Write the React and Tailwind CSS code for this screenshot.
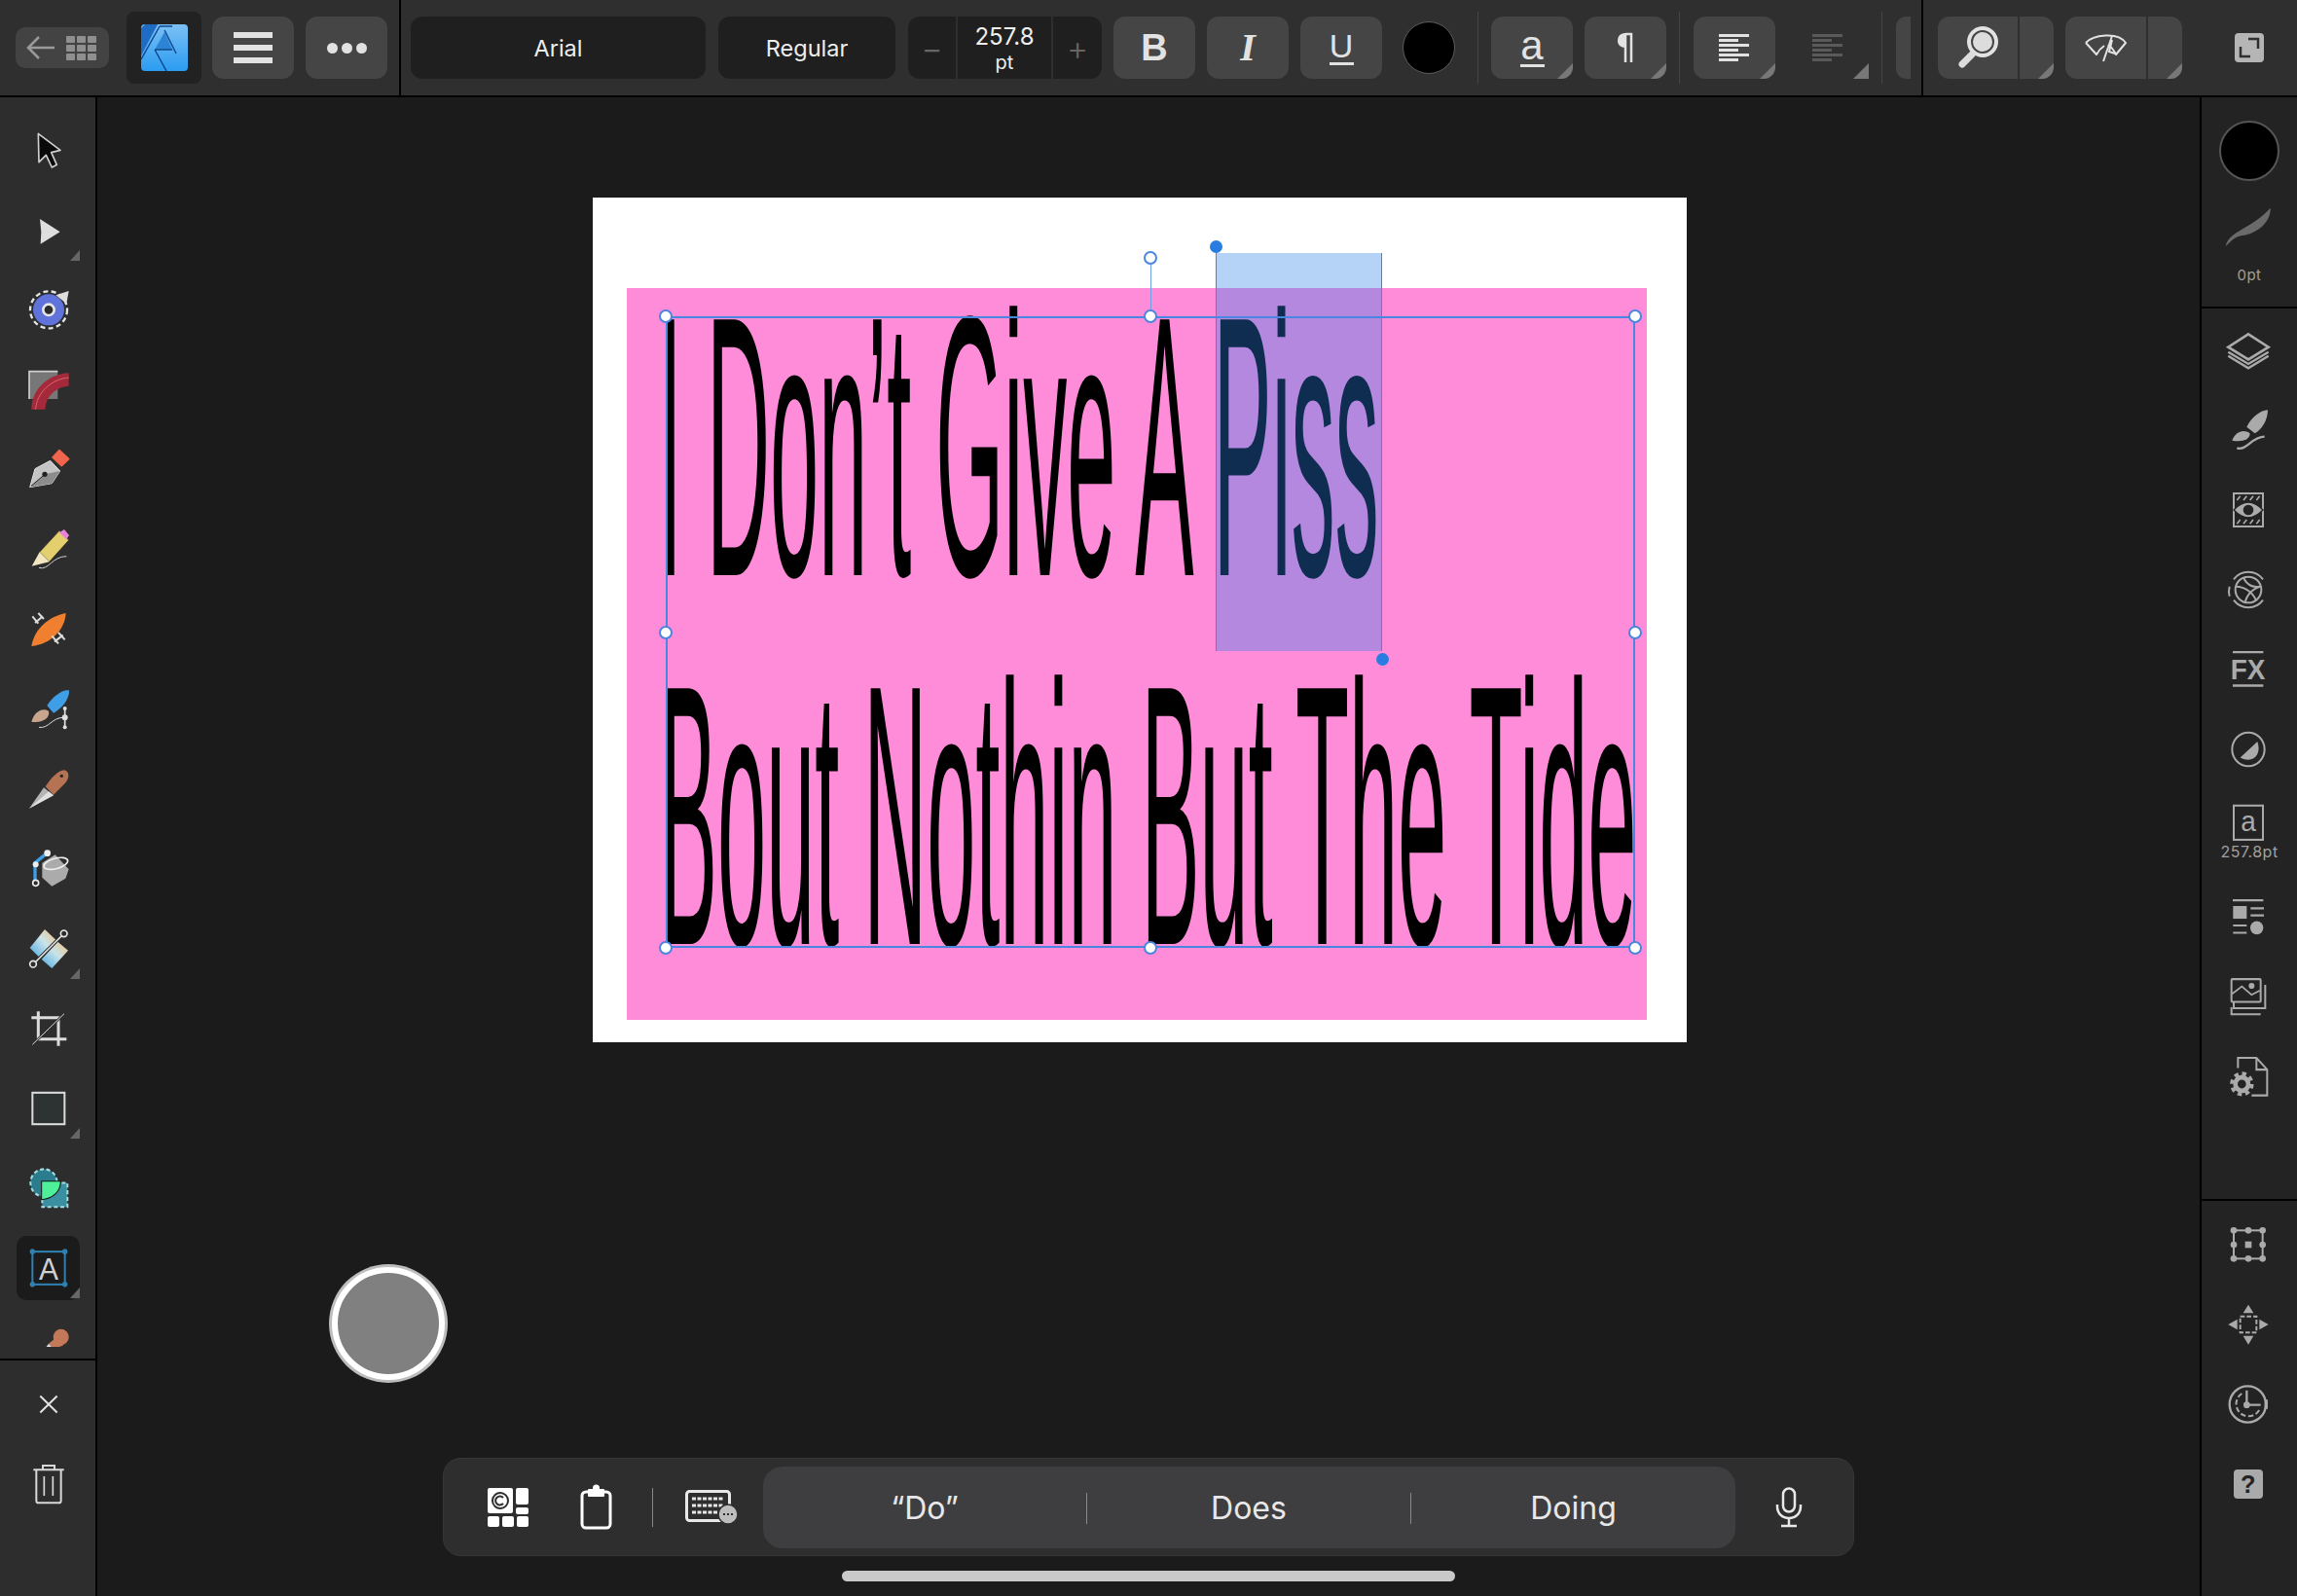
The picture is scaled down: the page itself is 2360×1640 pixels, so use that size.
import React from "react";

const Z = ({ cy, cx = 147, sy = 1, children }) => (
  <svg width={60} height={60} viewBox={`${cx - 90} ${cy - 90 * sy} 180 ${180 * sy}`} preserveAspectRatio="none" className="block" fill="none">
    {children}
  </svg>
);

const SY = 0.968;

const Corner = () => (
  <svg className="absolute right-[16px] bottom-[10px]" width="10" height="11" viewBox="0 0 10 11">
    <polygon points="10,0 10,11 0,11" fill="#666" />
  </svg>
);

const BtnCorner = () => (
  <svg className="absolute right-0 bottom-0" width="16" height="16" viewBox="0 0 16 16">
    <polygon points="16,0 16,16 0,16" fill="#787878" />
  </svg>
);

const tools = [
  { corner: false, svg: (
    <Z cy={135}><polygon points="118,82 186,133 158,140 175,178 160,186 142,148 120,170" fill="#0a0a0a" stroke="#cfcfcf" strokeWidth="5" strokeLinejoin="round" /></Z>
  ) },
  { corner: true, svg: (
    <Z cy={381}><polygon points="123,345 185,385 125,422 127,385" fill="#dedede" /></Z>
  ) },
  { corner: false, svg: (
    <Z cy={627}>
      <circle cx="150" cy="625" r="48" fill="#5f73db" />
      <circle cx="150" cy="625" r="17" fill="#2c2c2c" stroke="#e6e6e6" strokeWidth="8" />
      <circle cx="150" cy="625" r="57" stroke="#e6e6e6" strokeWidth="7" strokeDasharray="15 10" />
      <polygon points="172,580 212,567 205,606" fill="#dedede" />
    </Z>
  ) },
  { corner: false, svg: (
    <Z cy={873}>
      <rect x="90" y="815" width="88" height="85" fill="#777" />
      <path d="M90,900 V815 H178" stroke="#cfcfcf" strokeWidth="5" />
      <path d="M97,932 C97,870 150,822 212,820 L212,860 C175,862 140,890 140,932 Z" fill="#a42a3b" />
      <path d="M110,932 C112,880 160,838 212,834" stroke="#d9656f" strokeWidth="3" />
    </Z>
  ) },
  { corner: false, svg: (
    <Z cy={1119}>
      <polygon points="92,1172 108,1115 155,1090 185,1122 160,1160" fill="#c4c4c4" stroke="#e0e0e0" strokeWidth="3" strokeLinejoin="round" />
      <polygon points="92,1172 138,1132 185,1122 160,1160" fill="#8c8c8c" />
      <path d="M96,1168 L136,1134" stroke="#222" strokeWidth="3" />
      <circle cx="138" cy="1132" r="8" fill="#222" />
      <polygon points="183,1058 212,1085 190,1106 162,1080" fill="#f0654c" stroke="#f0654c" strokeWidth="5" strokeLinejoin="round" />
    </Z>
  ) },
  { corner: false, svg: (
    <Z cy={1365}>
      <polygon points="122,1372 183,1306 212,1335 152,1402" fill="#e4cf6e" stroke="#2a2a2a" strokeWidth="2" />
      <polygon points="98,1415 122,1372 152,1402" fill="#f3e7c0" />
      <polygon points="183,1312 198,1302 213,1320 205,1333" fill="#e882d8" />
      <path d="M120,1420 C150,1430 160,1385 205,1385" stroke="#cfcfcf" strokeWidth="3" />
    </Z>
  ) },
  { corner: false, svg: (
    <Z cy={141}>
      <path d="M97,192 C105,140 150,100 203,90 C200,140 160,185 97,192 Z" fill="#f08030" />
      <path d="M108,120 L132,100 M100,100 L118,122 M118,90 L135,108" stroke="#dcdcdc" strokeWidth="6" />
      <path d="M168,178 L194,158 M160,160 L180,184 M180,150 L200,172" stroke="#dcdcdc" strokeWidth="6" />
    </Z>
  ) },
  { corner: false, svg: (
    <Z cy={387}>
      <path d="M145,375 C160,350 190,325 213,328 C215,355 190,385 165,398 Z" fill="#3f9fe6" />
      <path d="M97,425 C105,395 130,380 150,392 C155,410 135,430 97,425 Z" fill="#c9a58d" />
      <path d="M200,382 V445" stroke="#e0e0e0" strokeWidth="5" />
      <path d="M120,442 C150,447 160,412 195,412" stroke="#dcdcdc" strokeWidth="3" />
      <circle cx="200" cy="384" r="6" fill="#e0e0e0" />
      <circle cx="200" cy="412" r="9" fill="#e0e0e0" />
      <circle cx="200" cy="442" r="6" fill="#e0e0e0" />
    </Z>
  ) },
  { corner: false, svg: (
    <Z cy={633}>
      <path d="M140,625 C155,600 180,575 198,574 C215,578 215,600 200,615 L165,650 Z" fill="#b57353" />
      <circle cx="190" cy="592" r="5" fill="#222" />
      <polygon points="90,692 135,628 165,652" fill="#b4b4b4" />
      <polygon points="90,692 150,640 165,652" fill="#e0e0e0" />
    </Z>
  ) },
  { corner: false, svg: (
    <Z cy={879}>
      <polygon points="130,860 170,835 212,880 202,908 160,932 130,905" fill="#ababab" />
      <ellipse cx="172" cy="862" rx="38" ry="16" transform="rotate(-15 172 862)" stroke="#eee" strokeWidth="5" />
      <path d="M108,915 L108,860 L145,830" stroke="#3f9fe6" strokeWidth="10" />
      <circle cx="110" cy="922" r="9" fill="#2c2c2c" stroke="#eee" strokeWidth="5" />
      <circle cx="110" cy="865" r="9" fill="#eee" />
      <circle cx="146" cy="830" r="10" fill="#eee" />
    </Z>
  ) },
  { corner: true, svg: (
    <Z cy={1125}>
      <defs>
        <linearGradient id="gq" x1="0" y1="1" x2="1" y2="0">
          <stop offset="0" stopColor="#4aa8e0" />
          <stop offset="0.55" stopColor="#c9e3ea" />
          <stop offset="1" stopColor="#f2c078" />
        </linearGradient>
      </defs>
      <polygon points="92,1122 138,1065 172,1097 122,1152" fill="url(#gq)" />
      <polygon points="128,1157 178,1103 210,1130 160,1185" fill="url(#gq)" />
      <path d="M105,1170 L195,1080" stroke="#2c2c2c" strokeWidth="10" />
      <path d="M105,1170 L195,1080" stroke="#e6e6e6" strokeWidth="5" />
      <circle cx="102" cy="1172" r="10" fill="#2c2c2c" stroke="#e6e6e6" strokeWidth="5" />
      <circle cx="197" cy="1078" r="10" fill="#2c2c2c" stroke="#e6e6e6" strokeWidth="5" />
    </Z>
  ) },
  { corner: false, svg: (
    <Z cy={1371}>
      <path d="M118,1318 V1403 H205 M97,1337 H180 V1424" stroke="#dcdcdc" strokeWidth="9" />
      <path d="M100,1420 L198,1325" stroke="#2c2c2c" strokeWidth="8" />
      <path d="M100,1420 L198,1325" stroke="#dcdcdc" strokeWidth="3" />
    </Z>
  ) },
  { corner: true, svg: (
    <Z cy={113} sy={SY}><rect x="100" y="66" width="99" height="94" fill="#2d3333" stroke="#dcdcdc" strokeWidth="6" /></Z>
  ) },
  { corner: false, svg: (
    <Z cy={351} sy={SY}>
      <circle cx="135" cy="335" r="41" fill="#2b7c8c" stroke="#a6dbe0" strokeWidth="6" strokeDasharray="12 8" />
      <rect x="130" y="335" width="78" height="72" fill="#3a8fa0" stroke="#a6dbe0" strokeWidth="6" strokeDasharray="12 8" />
      <path d="M128,330 H187 C187,360 165,382 128,385 Z" fill="#4ef09a" stroke="#111" strokeWidth="3" />
    </Z>
  ) },
  { corner: true, selected: true, svg: (
    <Z cy={589} sy={SY}>
      <rect x="100" y="540" width="100" height="98" stroke="#2f7fb0" strokeWidth="6" />
      <circle cx="100" cy="540" r="8" fill="#2f7fb0" />
      <circle cx="200" cy="540" r="8" fill="#2f7fb0" />
      <circle cx="100" cy="638" r="8" fill="#2f7fb0" />
      <circle cx="200" cy="638" r="8" fill="#2f7fb0" />
      <text x="150" y="624" textAnchor="middle" fontFamily="Liberation Sans" fontSize="90" fill="#d0d0d0">A</text>
    </Z>
  ) },
  { corner: false, svg: (
    <Z cy={827} sy={SY}>
      <circle cx="188" cy="795" r="24" fill="#c4785a" />
      <polygon points="175,795 150,815 165,830 195,820" fill="#c4785a" />
      <polygon points="138,830 150,815 165,830" fill="#ddd" />
    </Z>
  ) },
];

const Layers = () => (
  <Z cx={183} cy={780}>
    <path d="M118,785 L180,822 L242,785 M118,797 L180,835 L242,797" stroke="#aaa" strokeWidth="7" />
    <polygon points="180,730 242,770 180,808 118,770" fill="#232323" stroke="#aaa" strokeWidth="8" />
  </Z>
);
const RBrush = () => (
  <Z cx={183} cy={1030}>
    <path d="M175,1020 C190,990 215,970 240,968 C240,1000 220,1030 200,1040 Z" fill="#aaa" />
    <path d="M130,1062 C140,1035 165,1025 185,1040 C185,1060 160,1068 130,1062 Z" fill="#aaa" />
    <path d="M145,1085 C175,1095 190,1050 230,1050" stroke="#aaa" strokeWidth="7" />
  </Z>
);
const Mask = () => (
  <Z cx={183} cy={1275}>
    <rect x="135" y="1224" width="90" height="102" fill="#232323" stroke="#aaa" strokeWidth="6" />
    <path d="M145,1245 L155,1232 M165,1245 L175,1232 M185,1245 L195,1232 M205,1245 L215,1232 M145,1318 L155,1305 M165,1318 L175,1305 M185,1318 L195,1305 M205,1318 L215,1305" stroke="#aaa" strokeWidth="5" />
    <path d="M135,1275 Q180,1228 225,1275 Q180,1322 135,1275 Z" fill="#aaa" stroke="#232323" strokeWidth="4" />
    <circle cx="180" cy="1275" r="16" fill="#232323" />
  </Z>
);
const Swirl = () => (
  <Z cx={183} cy={180}>
    <circle cx="180" cy="180" r="40" stroke="#aaa" strokeWidth="6" />
    <path d="M135,148 A56,56 0 0 1 225,148 M225,212 A56,56 0 0 1 135,212 M122,200 A60,60 0 0 1 122,170" stroke="#aaa" strokeWidth="6" />
    <path d="M142,170 C170,170 195,190 205,215 M218,170 C195,175 175,195 170,220 M165,142 C175,165 195,175 215,170" stroke="#aaa" strokeWidth="6" />
  </Z>
);
const Fx = () => (
  <Z cx={183} cy={260} sy={SY}>
    <path d="M132,208 H226 M132,308 H226" stroke="#aaa" strokeWidth="7" />
    <text x="179" y="290" textAnchor="middle" fontFamily="Liberation Sans" fontWeight="700" fontSize="84" fill="#aaa">FX</text>
  </Z>
);
const Half = () => (
  <Z cx={183} cy={497} sy={SY}>
    <circle cx="180" cy="497" r="50" stroke="#aaa" strokeWidth="6" />
    <path d="M155,522 L208,474 C222,512 195,542 155,522 Z" fill="#aaa" />
  </Z>
);
const ListIcon = () => (
  <Z cx={183} cy={990} sy={SY}>
    <path d="M132,941 H226 M187,965 H228 M187,986 H228 M133,1016 H175 M133,1038 H175" stroke="#aaa" strokeWidth="6" />
    <rect x="133" y="958" width="42" height="38" fill="#aaa" />
    <circle cx="206" cy="1023" r="20" fill="#aaa" />
  </Z>
);
const Images = () => (
  <Z cx={183} cy={1230} sy={SY}>
    <rect x="128" y="1178" width="90" height="68" rx="3" stroke="#aaa" strokeWidth="6" />
    <path d="M130,1222 L160,1200 L190,1225 L216,1212" stroke="#aaa" strokeWidth="5" />
    <circle cx="190" cy="1198" r="9" fill="#aaa" />
    <path d="M232,1195 V1265 H135 V1246 M128,1262 V1283 H218" stroke="#aaa" strokeWidth="6" />
  </Z>
);
const DocGear = () => (
  <Z cx={183} cy={1465} sy={SY}>
    <path d="M148,1440 V1410 H205 L238,1445 V1522 H190 M205,1412 V1445 H238" stroke="#aaa" strokeWidth="6" />
    <circle cx="160" cy="1488" r="31" stroke="#aaa" strokeWidth="11" strokeDasharray="13 11.3" />
    <circle cx="160" cy="1488" r="20" stroke="#aaa" strokeWidth="14" />
  </Z>
);
const Transform = () => (
  <Z cx={183} cy={237}>
    <rect x="135" y="193" width="89" height="87" stroke="#aaa" strokeWidth="6" />
    {[[135,193],[180,193],[224,193],[135,237],[224,237],[135,280],[180,280],[224,280]].map(([x, y]) => (
      <circle key={`${x}-${y}`} cx={x} cy={y} r="10" fill="#aaa" />
    ))}
    <rect x="170" y="227" width="20" height="20" fill="#aaa" />
  </Z>
);
const Move = () => (
  <Z cx={183} cy={483}>
    <rect x="155" y="458" width="50" height="50" stroke="#aaa" strokeWidth="6" strokeDasharray="14 6" />
    <polygon points="180,422 164,448 196,448" fill="#aaa" />
    <polygon points="180,545 164,518 196,518" fill="#aaa" />
    <polygon points="118,483 146,467 146,499" fill="#aaa" />
    <polygon points="242,483 214,467 214,499" fill="#aaa" />
  </Z>
);
const Clock = () => (
  <Z cx={183} cy={725}>
    <circle cx="178" cy="725" r="56" stroke="#aaa" strokeWidth="7" />
    <path d="M160,692 A38,38 0 1 0 214,742" stroke="#aaa" strokeWidth="6" strokeDasharray="16 8" />
    <path d="M175,682 V727 H218" stroke="#aaa" strokeWidth="7" />
    <circle cx="175" cy="727" r="10" fill="#aaa" />
    <rect x="230" y="710" width="10" height="30" rx="4" fill="#aaa" />
  </Z>
);
const Help = () => (
  <Z cx={183} cy={975}>
    <rect x="135" y="930" width="90" height="90" rx="12" fill="#aaa" />
    <text x="179" y="1003" textAnchor="middle" fontFamily="Liberation Sans" fontWeight="700" fontSize="76" fill="#232323">?</text>
  </Z>
);

const rightItems = [Layers, RBrush, Mask, Swirl, Fx, Half];
const rightItems2 = [ListIcon, Images, DocGear];
const rightItems3 = [Transform, Move, Clock, Help];

const AlignLines = ({ color }) => (
  <svg width="32" height="32" viewBox="0 0 32 32" fill={color}>
    <rect x="0" y="2" width="31" height="3" />
    <rect x="0" y="7" width="20" height="3" />
    <rect x="0" y="12" width="31" height="3" />
    <rect x="0" y="17" width="20" height="3" />
    <rect x="0" y="22" width="31" height="3" />
    <rect x="0" y="27" width="20" height="3" />
  </svg>
);

const GrayBtn = ({ children, corner }) => (
  <div className="relative w-[84px] h-[64px] rounded-[12px] bg-[#454545] flex items-center justify-center text-[#e2e2e2] overflow-hidden">
    {children}
    {corner && <BtnCorner />}
  </div>
);

const Sep = ({ ml }) => <div className={`${ml} w-[1px] h-[74px] bg-[#454545]`} />;

function TopBar() {
  return (
    <div className="box-border h-[100px] shrink-0 flex items-center border-b-2 border-black bg-[#2f2f2f] font-['Inter'] text-[#eeeeee]">
      <div className="ml-[16px] w-[96px] h-[42px] rounded-[10px] bg-[#434343] flex items-center justify-between pl-[11px] pr-[13px]">
        <svg width="30" height="26" viewBox="0 0 30 26" fill="none" stroke="#9a9a9a" strokeWidth="2.5"><path d="M29,13 H3 M13,2 L2,13 L13,24" /></svg>
        <div className="grid grid-cols-3 gap-[2px]">
          {[0, 1, 2, 3, 4, 5, 6, 7, 8].map((i) => (
            <div key={i} className="w-[9px] h-[7px] rounded-[1px] bg-[#8f8f8f]" />
          ))}
        </div>
      </div>
      <div className="ml-[18px] w-[77px] h-[74px] rounded-[8px] bg-[#222222] flex items-center justify-center">
        <svg width="48" height="48" viewBox="0 0 48 48" fill="none">
          <defs>
            <linearGradient id="lg" x1="0" y1="0" x2="0" y2="1">
              <stop offset="0" stopColor="#7cc0f4" />
              <stop offset="1" stopColor="#2a9cf2" />
            </linearGradient>
          </defs>
          <rect width="48" height="48" rx="4" fill="url(#lg)" />
          <polygon points="0,4 4,0 17,0 0,32" fill="#1f6cc4" />
          <polygon points="14,26 24,8 32,26" fill="#2b84d4" />
          <path d="M0,36 L19,2 M19,2 H32 M14,26 H32 M14,26 L26,48 M24,6 L36,30" stroke="#12488f" strokeWidth="1.5" />
        </svg>
      </div>
      <div className="ml-[11px] w-[84px] h-[64px] rounded-[12px] bg-[#454545] flex flex-col items-center justify-center gap-[7px]">
        <div className="w-[40px] h-[6px] bg-[#e2e2e2]" />
        <div className="w-[40px] h-[6px] bg-[#e2e2e2]" />
        <div className="w-[40px] h-[6px] bg-[#e2e2e2]" />
      </div>
      <div className="ml-[12px] w-[84px] h-[64px] rounded-[12px] bg-[#454545] flex items-center justify-center gap-[4px]">
        <div className="w-[11px] h-[11px] rounded-full bg-[#e2e2e2]" />
        <div className="w-[11px] h-[11px] rounded-full bg-[#e2e2e2]" />
        <div className="w-[11px] h-[11px] rounded-full bg-[#e2e2e2]" />
      </div>
      <div className="ml-[12px] w-[2px] self-stretch bg-black" />
      <div className="ml-[10px] w-[303px] h-[64px] pt-[2px] rounded-[12px] bg-[#1f1f1f] flex items-center justify-center text-[23.5px]">Arial</div>
      <div className="ml-[13px] w-[182px] h-[64px] pt-[2px] rounded-[12px] bg-[#1f1f1f] flex items-center justify-center text-[23.5px]">Regular</div>
      <div className="ml-[13px] w-[199px] h-[64px] rounded-[12px] bg-[#1f1f1f] flex items-stretch overflow-hidden">
        <div className="w-[49px] flex items-center justify-center text-[34px] text-[#666666] font-light">−</div>
        <div className="w-[2px] bg-[#2f2f2f]" />
        <div className="w-[96px] flex flex-col items-center justify-center pt-[2px]">
          <div className="text-[24px] leading-[29px]">257.8</div>
          <div className="text-[20px] leading-[25px]">pt</div>
        </div>
        <div className="w-[2px] bg-[#2f2f2f]" />
        <div className="w-[50px] flex items-center justify-center text-[34px] text-[#666666] font-light">+</div>
      </div>
      <div className="ml-[12px]"><GrayBtn><span className="font-['Liberation_Sans'] font-bold text-[38px]">B</span></GrayBtn></div>
      <div className="ml-[12px]"><GrayBtn><span className="font-['Liberation_Serif'] font-bold italic text-[40px]">I</span></GrayBtn></div>
      <div className="ml-[12px]">
        <GrayBtn>
          <div className="flex flex-col items-center">
            <span className="font-['Liberation_Sans'] text-[34px] leading-[30px]">U</span>
            <div className="w-[25px] h-[3px] bg-[#e2e2e2] mt-[2px]" />
          </div>
        </GrayBtn>
      </div>
      <div className="ml-[21px] w-[54px] h-[54px] rounded-full bg-black border border-[#5c5c5c]" />
      <Sep ml="ml-[23px]" />
      <div className="ml-[13px]">
        <GrayBtn corner>
          <div className="flex flex-col items-center">
            <span className="font-['Liberation_Sans'] text-[42px] leading-[36px]">a</span>
            <div className="w-[25px] h-[3px] bg-[#e2e2e2] mt-[1px]" />
          </div>
        </GrayBtn>
      </div>
      <div className="ml-[12px]">
        <GrayBtn corner>
          <svg width="18" height="32" viewBox="0 0 18 32" fill="none">
            <path d="M9,1 C3,1 1,5 1,9 C1,13 4,16 9,16 Z" fill="#e2e2e2" />
            <path d="M9,1 V31 M15,1 V31 M9,2 H16" stroke="#e2e2e2" strokeWidth="2.5" />
          </svg>
        </GrayBtn>
      </div>
      <Sep ml="ml-[13px]" />
      <div className="ml-[14px]">
        <GrayBtn corner><AlignLines color="#e2e2e2" /></GrayBtn>
      </div>
      <div className="ml-[12px] relative w-[84px] h-[64px] flex items-center justify-center">
        <AlignLines color="#5a5a5a" />
        <BtnCorner />
      </div>
      <Sep ml="ml-[13px]" />
      <div className="ml-[14px] w-[15px] h-[64px] rounded-l-[10px] bg-[#454545]" />
      <div className="ml-[11px] w-[2px] self-stretch bg-black" />
      <div className="ml-[15px] relative w-[119px] h-[64px] rounded-[12px] bg-[#454545] flex overflow-hidden">
        <div className="w-[84px] flex items-center justify-center border-r-2 border-[#2f2f2f]">
          <svg width="46" height="46" viewBox="0 0 46 46" fill="none">
            <circle cx="28" cy="17" r="13" fill="#dcdcdc" />
            <circle cx="28" cy="17" r="14" stroke="#e2e2e2" strokeWidth="4" />
            <circle cx="28" cy="17" r="11" stroke="#454545" strokeWidth="2" />
            <path d="M17,30 L7,40" stroke="#dcdcdc" strokeWidth="7" strokeLinecap="round" />
          </svg>
        </div>
        <BtnCorner />
      </div>
      <div className="ml-[12px] relative w-[120px] h-[64px] rounded-[12px] bg-[#454545] flex overflow-hidden">
        <div className="w-[85px] flex items-center justify-center border-r-2 border-[#2f2f2f]">
          <svg width="44" height="32" viewBox="0 0 44 32" fill="none" stroke="#e2e2e2" strokeWidth="2">
            <path d="M1,11 C8,3 34,-1 42,11 L32,23 C30,19 27,15 24,13 M1,11 L12,23 C14,19 17,16 20,14" strokeLinejoin="round" />
            <path d="M19,30 L28,4 M28,8 L25,20 L31,22" />
          </svg>
        </div>
        <BtnCorner />
      </div>
      <div className="ml-[54px] w-[30px] h-[30px] rounded-[4px] bg-[#b5b5b5] relative">
        <svg className="absolute inset-0" width="30" height="30" viewBox="0 0 30 30" fill="none" stroke="#2f2f2f" strokeWidth="2.5">
          <path d="M6,14 V24 H16 M14,6 H24 V16" />
        </svg>
      </div>
    </div>
  );
}

function LeftBar() {
  return (
    <div className="box-border w-[100px] shrink-0 border-r-2 border-black bg-[#2d2d2d] flex flex-col">
      <div className="h-[1284px] pt-[14px] overflow-hidden shrink-0">
        {tools.map((t, i) => (
          <div key={i} className="relative h-[82px] flex items-center justify-center">
            {t.selected && <div className="absolute left-[17px] top-[8px] w-[65px] h-[66px] rounded-[10px] bg-[#1b1b1b]" />}
            <div className="relative">{t.svg}</div>
            {t.corner && <Corner />}
          </div>
        ))}
      </div>
      <div className="h-[12px] shrink-0" />
      <div className="border-t-2 border-black pt-[4px]">
        <div className="h-[82px] flex items-center justify-center">
          <Z cy={995} sy={SY}><path d="M124,970 L176,1020 M176,970 L124,1020" stroke="#e2e2e2" strokeWidth="6" /></Z>
        </div>
        <div className="h-[82px] flex items-center justify-center">
          <Z cy={1235} sy={SY}>
            <path d="M103,1192 H197 M132,1190 V1180 H168 V1190" stroke="#d8d8d8" strokeWidth="6" />
            <path d="M112,1192 V1285 C112,1289 114,1291 118,1291 H182 C186,1291 188,1289 188,1285 V1192" stroke="#d8d8d8" strokeWidth="6" />
            <path d="M136,1212 V1270 M163,1212 V1270" stroke="#d8d8d8" strokeWidth="5" />
          </Z>
        </div>
      </div>
    </div>
  );
}

function RightBar() {
  return (
    <div className="box-border w-[100px] shrink-0 border-l-2 border-black bg-[#232323] flex flex-col text-[#a0a0a0] font-['Inter']">
      <div className="box-border h-[217px] shrink-0 flex flex-col items-center pt-[24px] border-b-2 border-black">
        <div className="w-[62px] h-[62px] rounded-full bg-black border-2 border-[#555555]" />
        <div className="mt-[16px]">
          <Z cx={183} cy={395}><path d="M110,458 C120,410 190,405 248,340 C250,385 205,420 160,425 C135,430 125,445 110,458 Z" fill="#6a6a6a" /></Z>
        </div>
        <div className="mt-[11px] text-[15px] leading-[20px] tracking-[0.5px]">0pt</div>
      </div>
      <div className="pt-[2px]">
        {rightItems.map((C, i) => (
          <div key={i} className="h-[82px] flex items-center justify-center"><C /></div>
        ))}
        <div className="h-[90px] flex flex-col items-center relative">
          <div className="mt-[4px]">
            <Z cx={183} cy={712} sy={SY}>
              <rect x="135" y="662" width="90" height="102" stroke="#aaa" strokeWidth="6" />
              <text x="180" y="738" textAnchor="middle" fontFamily="Liberation Sans" fontSize="84" fill="#aaa">a</text>
            </Z>
          </div>
          <div className="absolute top-[54px] text-[16px] leading-[20px] tracking-[0.5px]">257.8pt</div>
        </div>
        {rightItems2.map((C, i) => (
          <div key={i} className="h-[82px] flex items-center justify-center"><C /></div>
        ))}
      </div>
      <div className="flex-1" />
      <div className="box-border border-t-2 border-black pt-[4px] h-[408px]">
        {rightItems3.map((C, i) => (
          <div key={i} className="h-[82px] flex items-center justify-center"><C /></div>
        ))}
      </div>
    </div>
  );
}

const handles = [
  "left-[68px] top-[115px]", "left-[566px] top-[115px]", "left-[1064px] top-[115px]",
  "left-[68px] top-[440px]", "left-[1064px] top-[440px]",
  "left-[68px] top-[764px]", "left-[566px] top-[764px]", "left-[1064px] top-[764px]",
  "left-[566px] top-[55px]",
];

function Artboard() {
  return (
    <div className="absolute left-[509px] top-[103px] w-[1124px] h-[868px] bg-white">
      <div className="absolute left-[35px] top-[93px] w-[1048px] h-[752px] bg-[#ff8cd9]" />
      <div className="absolute left-[67px] top-[71px] origin-top-left [transform:scaleX(0.2357)] font-['Liberation_Sans'] text-[382px] leading-[370px] text-black whitespace-nowrap">I Don’t Give A Piss</div>
      <div className="absolute left-[68px] top-[450px] origin-top-left [transform:scaleX(0.2357)] font-['Liberation_Sans'] text-[382px] leading-[370px] text-black whitespace-nowrap">Bout Nothin But The Tide</div>
      <div className="absolute left-[640px] top-[57px] w-[171px] h-[409px] bg-[#2880e8]/35 border-x border-[#3f86e0]" />
      <div className="absolute left-[75px] top-[122px] w-[996px] h-[649px] border-2 border-[#4a85e0]" />
      <div className="absolute left-[573px] top-[62px] w-[1px] h-[60px] bg-[#6fa0e6]" />
      {handles.map((h) => (
        <div key={h} className={`absolute ${h} w-[14px] h-[14px] rounded-full bg-white border-2 border-[#4a85e0]`} />
      ))}
      <div className="absolute left-[634px] top-[44px] w-[13px] h-[13px] rounded-full bg-[#2a7de0]" />
      <div className="absolute left-[805px] top-[468px] w-[13px] h-[13px] rounded-full bg-[#2a7de0]" />
    </div>
  );
}

function BottomBar() {
  return (
    <div className="absolute left-[355px] top-[1398px] w-[1450px] h-[101px] rounded-[18px] bg-[#2e2e2e] border border-[#363636] flex items-center font-['Inter'] text-[#e8e8e8]">
      <svg className="ml-[45px] shrink-0" width="42" height="40" viewBox="0 0 42 40" fill="#fff">
        <rect x="0" y="0" width="26" height="26" rx="2" />
        <circle cx="13" cy="13" r="8" fill="none" stroke="#2e2e2e" strokeWidth="2" />
        <path d="M16,10 A4.5,4.5 0 1 0 16,16" fill="none" stroke="#2e2e2e" strokeWidth="2" />
        <rect x="29" y="0" width="13" height="17" rx="2" />
        <rect x="29" y="20" width="13" height="7" rx="2" />
        <rect x="0" y="29" width="12" height="11" rx="2" />
        <rect x="15" y="29" width="12" height="11" rx="2" />
        <rect x="30" y="29" width="12" height="11" rx="2" />
      </svg>
      <svg className="ml-[53px] shrink-0" width="34" height="47" viewBox="0 0 34 47" fill="none">
        <rect x="2" y="8" width="29" height="37" rx="4" stroke="#fff" strokeWidth="3" />
        <rect x="8" y="5" width="17" height="8" rx="1" fill="#fff" />
        <circle cx="16.5" cy="4" r="3.5" fill="#fff" />
      </svg>
      <div className="ml-[40px] w-[1px] h-[40px] bg-[#8a8a8a] shrink-0" />
      <svg className="ml-[33px] shrink-0" width="54" height="36" viewBox="0 0 54 36" fill="none">
        <rect x="1.5" y="1.5" width="44" height="30" rx="3" stroke="#e8e8e8" strokeWidth="3" />
        <path d="M7,9 H40 M7,16 H40 M7,23 H34" stroke="#e8e8e8" strokeWidth="3" strokeDasharray="4 1.5" />
        <circle cx="44" cy="25" r="10" fill="#bdbdbd" stroke="#2e2e2e" strokeWidth="1.5" />
        <path d="M39,25 H49" stroke="#2e2e2e" strokeWidth="2" strokeDasharray="2 2" />
      </svg>
      <div className="ml-[26px] w-[999px] h-[84px] pt-[2px] rounded-[20px] bg-[#3e3e40] flex items-center text-[32px] shrink-0">
        <div className="w-[332px] text-center">“Do”</div>
        <div className="w-[1px] h-[32px] bg-[#8a8a8a]" />
        <div className="w-[332px] text-center">Does</div>
        <div className="w-[1px] h-[32px] bg-[#8a8a8a]" />
        <div className="flex-1 text-center">Doing</div>
      </div>
      <svg className="ml-[40px] shrink-0" width="30" height="42" viewBox="0 0 30 42" fill="none" stroke="#e8e8e8" strokeWidth="2.5">
        <rect x="9" y="1.5" width="12" height="24" rx="6" />
        <path d="M3,18 V20 C3,27 8,32 15,32 C22,32 27,27 27,20 V18 M15,32 V40 M7,40 H23" />
      </svg>
    </div>
  );
}

export default function App() {
  return (
    <div className="w-[2360px] h-[1640px] overflow-hidden flex flex-col bg-[#1b1b1b]">
      <TopBar />
      <div className="flex-1 flex min-h-0">
        <LeftBar />
        <div className="relative flex-1 bg-[#1b1b1b] overflow-hidden">
          <Artboard />
          <div className="absolute left-[241px] top-[1202px] w-[116px] h-[116px] rounded-full bg-[#808080] border-[6px] border-white ring-[3px] ring-[#bdbdbd]" />
          <BottomBar />
          <div className="absolute left-[765px] top-[1514px] w-[630px] h-[11px] rounded-full bg-[#c9c9c9]" />
        </div>
        <RightBar />
      </div>
    </div>
  );
}
